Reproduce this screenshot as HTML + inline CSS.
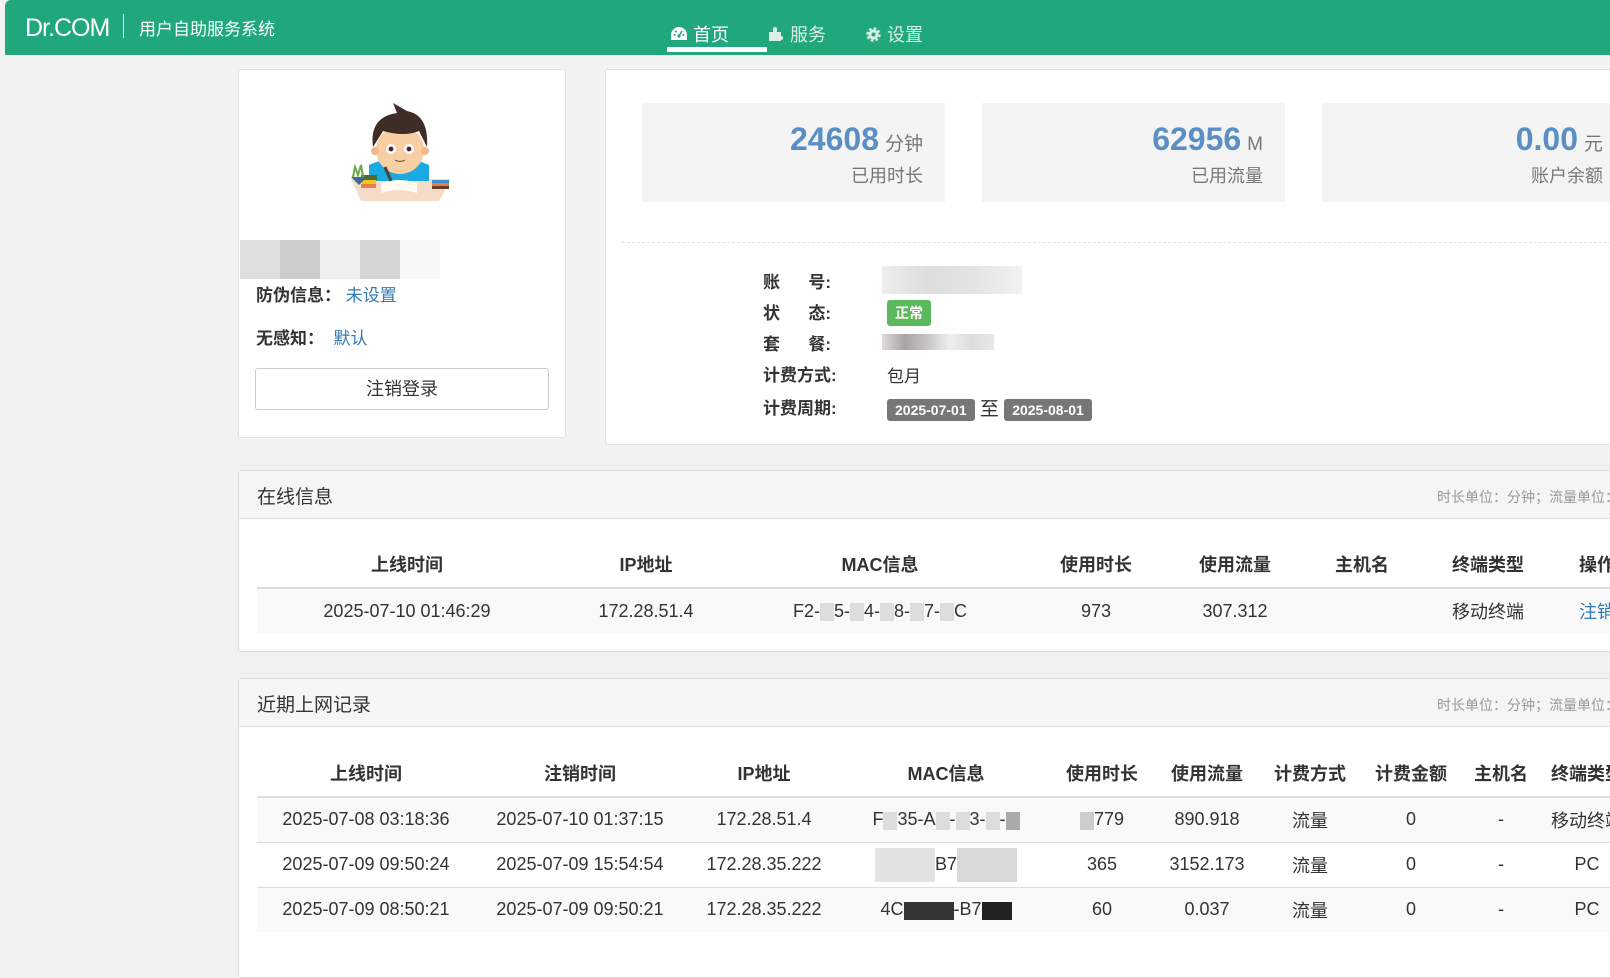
<!DOCTYPE html>
<html><head><meta charset="utf-8">
<style>
*{box-sizing:border-box;margin:0;padding:0}
html,body{width:1610px;height:916px;overflow:hidden;background:#f2f2f2;font-family:"Liberation Sans","Noto Sans CJK SC",sans-serif;color:#333}
.nav{position:absolute;left:5px;top:0;width:1605px;height:55px;background:#20a77b;border-top-left-radius:6px;color:#fff}
.logo{position:absolute;left:20px;top:14px;font-size:25px;letter-spacing:-1px}
.sep{position:absolute;left:118px;top:14px;width:1px;height:24px;background:#e8f5ef}
.sys{position:absolute;left:134px;top:15px;font-size:17px}
.ni{position:absolute;top:21px;font-size:18px;display:flex;align-items:center;gap:5px}
.ni.dim{color:#d7efe5}
.ul{position:absolute;left:662px;top:47px;width:100px;height:5px;background:#fff}
.card{position:absolute;background:#fff;border:1px solid #e0e0e0;border-radius:3px}
.blur{position:absolute;height:39px}
.lbl{position:absolute;font-size:17px;font-weight:bold;color:#333}
.lnk{color:#337ab7;font-weight:normal}
.btn{position:absolute;left:255px;top:368px;width:294px;height:42px;border:1px solid #ccc;border-radius:3px;text-align:center;line-height:40px;font-size:18px;background:#fff}
.stat{position:absolute;top:103px;width:303px;height:99px;background:#f4f4f4;text-align:right;padding-right:22px}
.stat .n{font-size:32px;font-weight:bold;color:#5b8fc3;line-height:1;margin-top:20px}
.stat .n span{font-size:19px;font-weight:normal;color:#777;margin-left:6px}
.stat .t{font-size:18px;color:#777;margin-top:7px}
.dash{position:absolute;left:622px;top:242px;width:1000px;border-top:1px dashed #e3e3e3}
.il{position:absolute;left:763px;font-size:17px;font-weight:bold}
.iv{position:absolute;left:887px;font-size:17px}
.badge{display:inline-block;color:#fff;font-weight:bold;font-size:14px;padding:3px 8px;border-radius:3px}
.panel{position:absolute;left:238px;width:1400px;background:#fff;border:1px solid #ddd;border-radius:3px}
.ph{height:48px;background:#f5f5f5;border-bottom:1px solid #ddd;position:relative}
.ph .t{position:absolute;left:18px;top:11px;font-size:19px}
.ph .r{position:absolute;left:1198px;top:16px;font-size:14px;color:#999;white-space:nowrap}
table{border-collapse:collapse;position:absolute;left:18px;table-layout:fixed;font-size:18px}
th{font-weight:bold;text-align:center;height:48px;border-bottom:2px solid #ddd;vertical-align:middle;white-space:nowrap}
td{text-align:center;height:45px;border-top:1px solid #ddd;white-space:nowrap;overflow:hidden}
tr.s td{background:#f9f9f9}
.g{display:inline-block;width:14px;height:18px;background:#ddd;vertical-align:middle}
</style></head><body>
<div class="nav">
  <div class="logo">Dr.COM</div><div class="sep"></div><div class="sys">用户自助服务系统</div>
  <div class="ni" style="left:665px"><svg width="18" height="16" viewBox="0 0 18 16"><path d="M9 1A8 8 0 0 0 1 9v5h16V9A8 8 0 0 0 9 1z" fill="#fff"/><circle cx="9" cy="10" r="1.6" fill="#20a77b"/><path d="M9 10L12 5" stroke="#20a77b" stroke-width="1.6"/><circle cx="4.5" cy="9" r="1" fill="#20a77b"/><circle cx="6" cy="5.5" r="1" fill="#20a77b"/><circle cx="13.5" cy="9" r="1" fill="#20a77b"/></svg>首页</div>
  <div class="ni dim" style="left:762px"><svg width="18" height="16" viewBox="0 0 18 16"><path d="M2 6h4V3a2 2 0 0 1 4 0v3h4v4a2 2 0 0 1 0 4v1H2z" fill="#d7efe5"/></svg>服务</div>
  <div class="ni dim" style="left:860px"><svg width="17" height="17" viewBox="0 0 17 17"><circle cx="8.5" cy="8.5" r="5.5" fill="none" stroke="#d7efe5" stroke-width="3.4" stroke-dasharray="2.4 1.9"/><circle cx="8.5" cy="8.5" r="5" fill="#d7efe5"/><circle cx="8.5" cy="8.5" r="2" fill="#20a77b"/></svg>设置</div>
  <div class="ul"></div>
</div>

<div class="card" style="left:238px;top:69px;width:328px;height:369px"></div>
<svg style="position:absolute;left:345px;top:103px" width="112" height="108" viewBox="0 0 112 108">
  <path d="M6 76h100l-12 22H16z" fill="#f6dcc8"/>
  <path d="M24 62q30-14 60 0v16H24z" fill="#1aaadf"/>
  <circle cx="55" cy="47" r="24" fill="#f8cfa4"/>
  <circle cx="30" cy="48" r="4" fill="#f3b789"/><circle cx="80" cy="48" r="4" fill="#f3b789"/>
  <path d="M28 44q-4-30 24-34l-4-10 14 8q22 4 20 36l-8-16q-14 6-36 0z" fill="#3e2c26"/>
  <circle cx="46" cy="46" r="5" fill="#fff"/><circle cx="46" cy="46" r="2.4" fill="#3e2c26"/>
  <circle cx="64" cy="46" r="5" fill="#fff"/><circle cx="64" cy="46" r="2.4" fill="#3e2c26"/>
  <path d="M50 57q5 3 10 0" stroke="#8a5a3c" stroke-width="1.2" fill="none"/>
  <path d="M36 80q18-6 36 0v10q-18-6-36 0z" fill="#fffaf2"/>
  <rect x="16" y="72" width="16" height="5" fill="#4b6b2f"/><rect x="17" y="77" width="14" height="4" fill="#f4c518"/><rect x="16" y="81" width="15" height="4" fill="#e67e4c"/>
  <path d="M6 74l8 8 8-8z" fill="#3f6b8c"/><path d="M8 74l2-10 3 8 3-10 2 12" stroke="#6aa844" stroke-width="2" fill="none"/>
  <rect x="87" y="77" width="17" height="3" fill="#3d8fd0"/><rect x="87" y="80" width="17" height="3" fill="#e67e4c"/><rect x="87" y="83" width="17" height="3" fill="#6b3e2a"/>
  <path d="M40 64l6 14" stroke="#444" stroke-width="3"/>
</svg>
<div class="blur" style="left:240px;top:240px;width:40px;background:#dedede"></div>
<div class="blur" style="left:280px;top:240px;width:40px;background:#cdcdcd"></div>
<div class="blur" style="left:320px;top:240px;width:40px;background:#efefef"></div>
<div class="blur" style="left:360px;top:240px;width:40px;background:#d5d5d5"></div>
<div class="blur" style="left:400px;top:240px;width:40px;background:#f8f8f8"></div>
<div class="lbl" style="left:256px;top:281px">防伪信息：&nbsp;<span class="lnk">未设置</span></div>
<div class="lbl" style="left:256px;top:324px">无感知：&nbsp;&nbsp;<span class="lnk">默认</span></div>
<div class="btn">注销登录</div>

<div class="card" style="left:605px;top:69px;width:1100px;height:376px"></div>
<div class="stat" style="left:642px"><div class="n">24608<span>分钟</span></div><div class="t">已用时长</div></div>
<div class="stat" style="left:982px"><div class="n">62956<span>M</span></div><div class="t">已用流量</div></div>
<div class="stat" style="left:1322px"><div class="n">0.00<span>元</span></div><div class="t">账户余额</div></div>
<div class="dash"></div>
<div class="il" style="top:268px">账&nbsp;&nbsp;&nbsp;&nbsp;&nbsp;&nbsp;号:</div>
<div class="il" style="top:299px">状&nbsp;&nbsp;&nbsp;&nbsp;&nbsp;&nbsp;态:</div>
<div class="il" style="top:330px">套&nbsp;&nbsp;&nbsp;&nbsp;&nbsp;&nbsp;餐:</div>
<div class="il" style="top:361px">计费方式:</div>
<div class="il" style="top:394px">计费周期:</div>
<div style="position:absolute;left:882px;top:266px;width:140px;height:28px;background:linear-gradient(90deg,#eee,#ddd,#e4e4e4,#f2f2f2)"></div>
<div class="iv" style="top:300px"><span class="badge" style="background:#5cb85c">正常</span></div>
<div style="position:absolute;left:882px;top:334px;width:112px;height:16px;background:linear-gradient(90deg,#e0dcdc,#aaa4a4,#c4c4c4,#eee,#ddd,#e8e8e8)"></div>
<div class="iv" style="top:362px">包月</div>
<div class="iv" style="top:394px;font-size:19px"><span class="badge" style="background:#777">2025-07-01</span> 至 <span class="badge" style="background:#777">2025-08-01</span></div>

<div class="panel" style="top:470px;height:182px">
  <div class="ph"><div class="t">在线信息</div><div class="r">时长单位：分钟；流量单位：M</div></div>
  <table style="top:69px;width:1382px">
    <colgroup><col style="width:300px"><col style="width:178px"><col style="width:290px"><col style="width:142px"><col style="width:136px"><col style="width:118px"><col style="width:134px"><col style="width:84px"></colgroup>
    <tr><th>上线时间</th><th>IP地址</th><th>MAC信息</th><th>使用时长</th><th>使用流量</th><th>主机名</th><th>终端类型</th><th>操作</th></tr>
    <tr class="s"><td>2025-07-10 01:46:29</td><td>172.28.51.4</td><td>F2-<span class="g"></span>5-<span class="g"></span>4-<span class="g"></span>8-<span class="g"></span>7-<span class="g"></span>C</td><td>973</td><td>307.312</td><td></td><td>移动终端</td><td style="color:#337ab7">注销</td></tr>
  </table>
</div>

<div class="panel" style="top:678px;height:300px">
  <div class="ph"><div class="t">近期上网记录</div><div class="r">时长单位：分钟；流量单位：M</div></div>
  <table style="top:70px;width:1376px">
    <colgroup><col style="width:218px"><col style="width:210px"><col style="width:158px"><col style="width:206px"><col style="width:106px"><col style="width:104px"><col style="width:102px"><col style="width:100px"><col style="width:80px"><col style="width:92px"></colgroup>
    <tr><th>上线时间</th><th>注销时间</th><th>IP地址</th><th>MAC信息</th><th>使用时长</th><th>使用流量</th><th>计费方式</th><th>计费金额</th><th>主机名</th><th>终端类型</th></tr>
    <tr class="s"><td>2025-07-08 03:18:36</td><td>2025-07-10 01:37:15</td><td>172.28.51.4</td><td>F<span class="g"></span>35-A<span class="g"></span>-<span class="g"></span>3-<span class="g"></span>-<span class="g" style="background:#aaa"></span></td><td><span class="g" style="background:#ccc"></span>779</td><td>890.918</td><td>流量</td><td>0</td><td>-</td><td>移动终端</td></tr>
    <tr><td>2025-07-09 09:50:24</td><td>2025-07-09 15:54:54</td><td>172.28.35.222</td><td><span class="g" style="width:60px;height:34px;background:#e2e2e2"></span>B7<span class="g" style="width:60px;height:34px;background:#d8d8d8"></span></td><td>365</td><td>3152.173</td><td>流量</td><td>0</td><td>-</td><td>PC</td></tr>
    <tr class="s"><td>2025-07-09 08:50:21</td><td>2025-07-09 09:50:21</td><td>172.28.35.222</td><td>4C<span class="g" style="width:50px;background:#333"></span>-B7<span class="g" style="width:30px;background:#222"></span></td><td>60</td><td>0.037</td><td>流量</td><td>0</td><td>-</td><td>PC</td></tr>
  </table>
</div>
</body></html>
